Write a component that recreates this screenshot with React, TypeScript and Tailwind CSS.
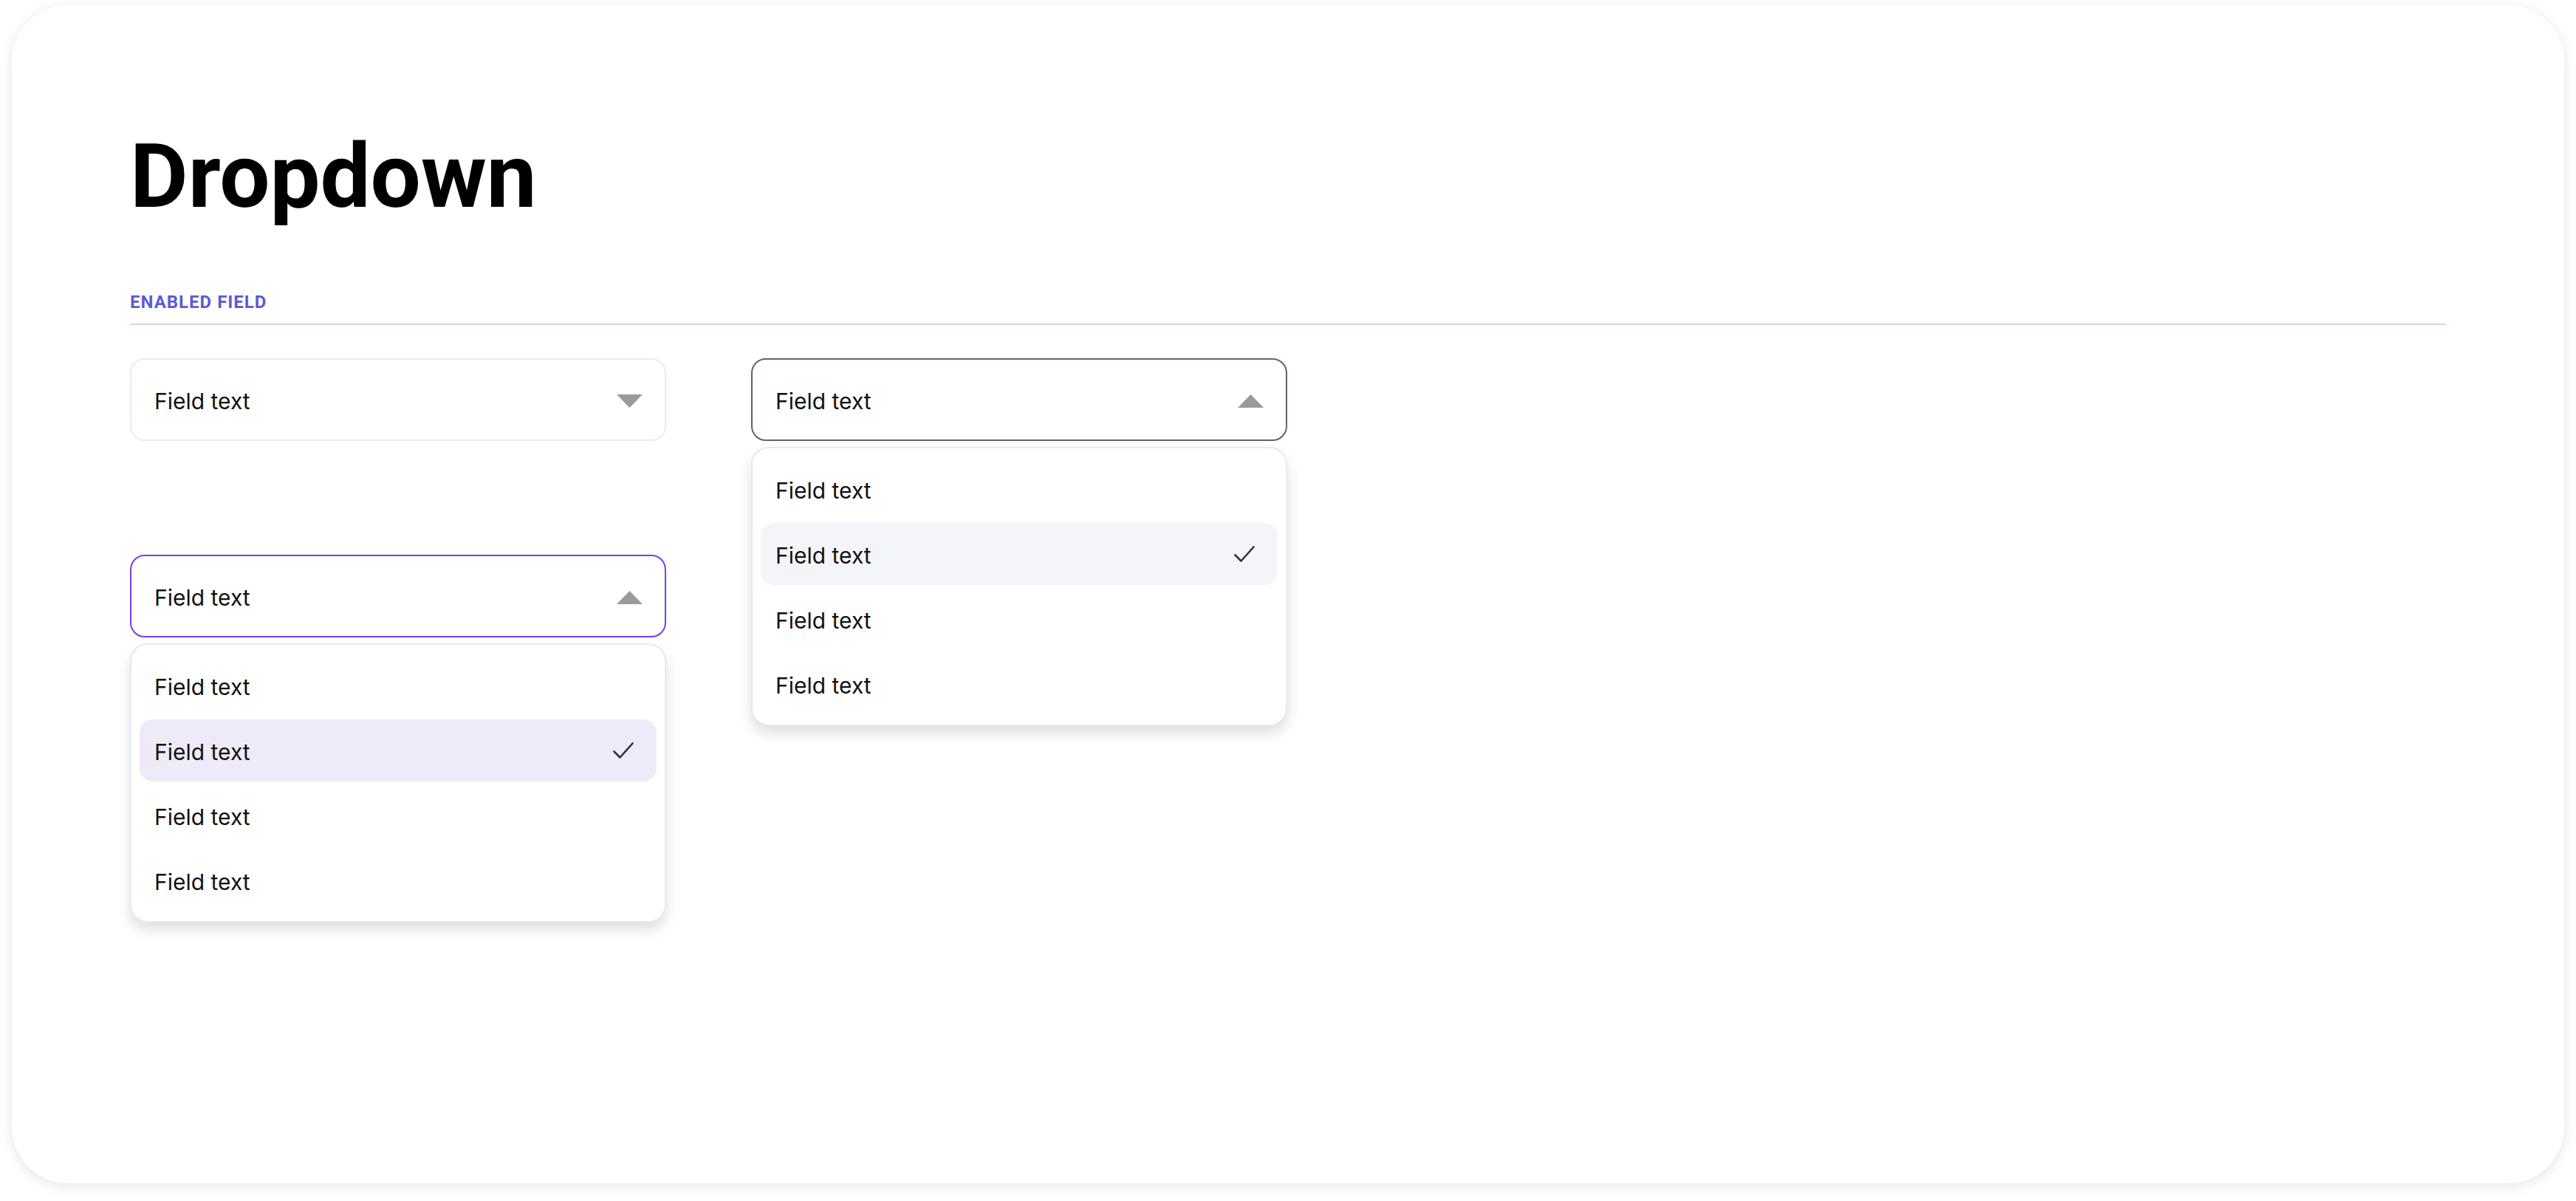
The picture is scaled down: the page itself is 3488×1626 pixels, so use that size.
import React from "react";

function Caret({ up }: { up?: boolean }) {
  return (
    <svg width="35" height="18" viewBox="0 0 35 18" className="shrink-0 mt-[3px]">
      {up ? (
        <polygon points="0,18 35,18 17.5,0" fill="#9a9a9a" />
      ) : (
        <polygon points="0,0 35,0 17.5,18" fill="#9a9a9a" />
      )}
    </svg>
  );
}

function Check() {
  return (
    <svg width="28" height="22" viewBox="0 0 28 22" className="shrink-0">
      <polyline
        points="1.5,12.5 9.5,20.5 26.5,1.5"
        fill="none"
        stroke="#333333"
        strokeWidth="2.6"
        strokeLinecap="round"
        strokeLinejoin="round"
      />
    </svg>
  );
}

function Field({ border, up }: { border: string; up?: boolean }) {
  return (
    <div
      className={`w-[726px] h-[112px] rounded-[20px] border-2 bg-white flex items-center justify-between pl-[31px] pr-[30px] ${border}`}
    >
      <span className="pt-[3px] font-['Inter',sans-serif] text-[30px] leading-none text-[#111111]">
        Field text
      </span>
      <Caret up={up} />
    </div>
  );
}

function Menu({ highlight }: { highlight: string }) {
  const items = [0, 1, 2, 3];
  return (
    <div className="absolute left-0 top-full mt-[8px] w-[726px] rounded-[24px] border-2 border-[#e7e9f4] bg-white shadow-[0_10px_18px_rgba(0,0,0,0.13)] py-[13px] px-[11px] flex flex-col gap-[4px] z-10">
      {items.map((i) => (
        <div
          key={i}
          className={`h-[84px] rounded-[18px] flex items-center justify-between pl-[20px] pr-[31px] ${
            i === 1 ? highlight : ""
          }`}
        >
          <span className="pt-[3px] font-['Inter',sans-serif] text-[30px] leading-none text-[#111111]">
            Field text
          </span>
          {i === 1 ? <Check /> : null}
        </div>
      ))}
    </div>
  );
}

export default function App() {
  return (
    <div className="w-[3488px] h-[1626px] bg-white pt-[7px] px-[16px] overflow-hidden">
      <div className="h-[1595px] rounded-[76px] bg-white shadow-[0_4px_18px_rgba(0,0,0,0.10)] px-[160px] pt-[172px]">
        <h1 className="font-['Roboto',sans-serif] font-bold text-[121px] leading-none text-black">
          Dropdown
        </h1>
        <div className="mt-[97px] font-['Roboto',sans-serif] font-bold text-[24px] leading-none tracking-[1px] text-[#5b5bd6]">
          ENABLED FIELD
        </div>
        <div className="mt-[17px] h-[2px] bg-[#d2cff0]" />
        <div className="mt-[45px] flex flex-col gap-[154px]">
          <div className="flex gap-[115px]">
            <Field border="border-[#ebebf2]" />
            <div className="relative">
              <Field border="border-[#5a6675]" up />
              <Menu highlight="bg-[#f4f5f9]" />
            </div>
          </div>
          <div className="flex">
            <div className="relative">
              <Field border="border-[#7a3cf0]" up />
              <Menu highlight="bg-[#efeaf8]" />
            </div>
          </div>
        </div>
      </div>
    </div>
  );
}
